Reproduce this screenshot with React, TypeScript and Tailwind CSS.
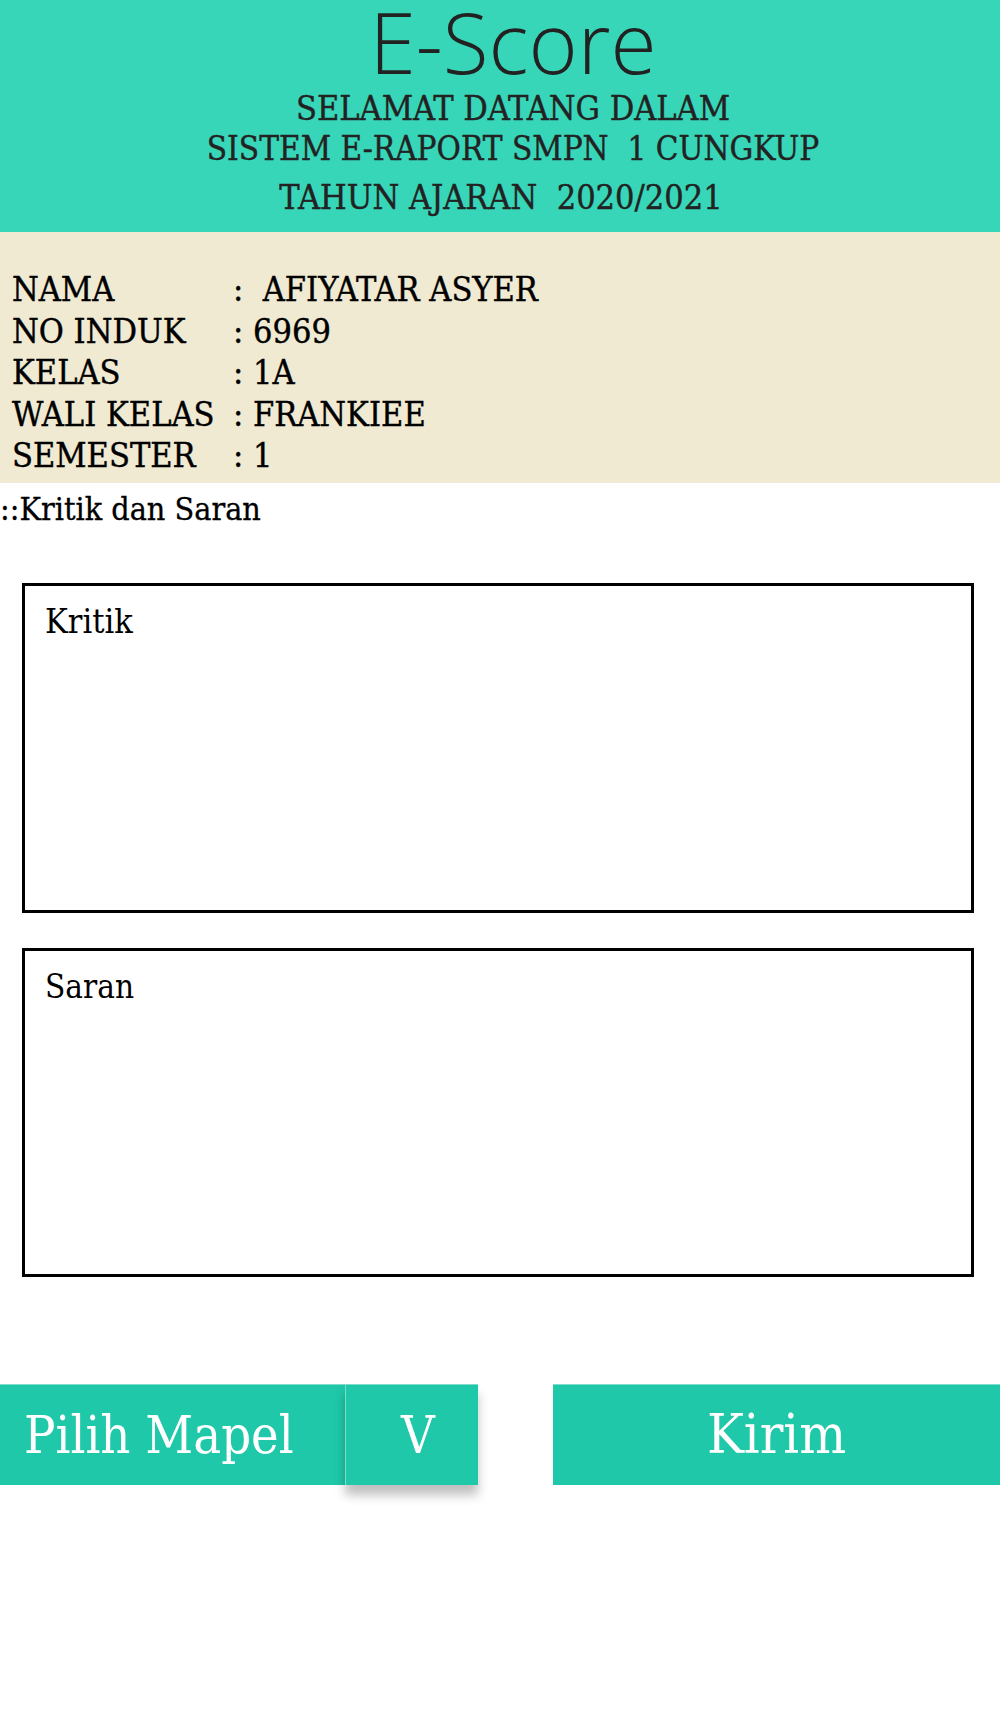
const slab = { fontFamily: '"DejaVu Serif Condensed", "DejaVu Serif", serif' }

const rows: [string, string][] = [
  ['NAMA', ':  AFIYATAR ASYER'],
  ['NO INDUK', ': 6969'],
  ['KELAS', ': 1A'],
  ['WALI KELAS', ': FRANKIEE'],
  ['SEMESTER', ': 1'],
]

export default function App() {
  return (
    <div className="w-[1000px] min-h-[1709px] bg-white text-black">
      {/* header */}
      <header className="h-[232px] bg-[#38d6b8] text-[#222222] flex flex-col items-center pl-[26px]">
        <h1
          className="text-[84px] leading-[84px] font-light"
          style={{ fontFamily: '"Open Sans", sans-serif' }}
        >
          E-Score
        </h1>
        <div style={slab} className="text-[34px] leading-[40px] mt-[4px] text-center whitespace-pre [-webkit-text-stroke-width:0.4px]">
          <p>SELAMAT DATANG DALAM</p>
          <p className="mt-[1px] text-[33px]">SISTEM E-RAPORT SMPN  1 CUNGKUP</p>
          <p className="mt-[8px] -ml-[24px]">TAHUN AJARAN  2020/2021</p>
        </div>
      </header>

      {/* data siswa */}
      <section style={slab} className="bg-[#f0ead2] pt-[37px] pb-[6px] pl-[12px] text-[34px] leading-[41.5px] [-webkit-text-stroke-width:0.4px]">
        {rows.map(([k, v]) => (
          <div key={k} className="grid grid-cols-[221px_auto]">
            <span>{k}</span>
            <span className="whitespace-pre">{v}</span>
          </div>
        ))}
      </section>

      <p style={slab} className="text-[32px] leading-[40px] mt-[6px] [-webkit-text-stroke-width:0.3px]">::Kritik dan Saran</p>

      {/* form */}
      <div className="pl-[22px] pr-[26px] mt-[54px] flex flex-col gap-[35px]">
        <div className="h-[330px] border-[3px] border-black pl-[20px] pt-[15px]">
          <p style={slab} className="text-[34px] leading-[40px]">Kritik</p>
        </div>
        <div className="h-[329px] border-[3px] border-black pl-[20px] pt-[16px]">
          <p style={slab} className="text-[33px] leading-[40px]">Saran</p>
        </div>
      </div>

      {/* tombol */}
      <div style={slab} className="mt-[107px] flex h-[101px] text-white text-[52px]">
        <div className="w-[345px] bg-[#1fc8a9] flex items-center pl-[24px] border-t border-[#7fdccb]">
          Pilih Mapel
        </div>
        <div className="w-[133px] bg-[#1fc8a9] flex items-center justify-center pl-[12px] border-l border-t border-[#7fdccb] shadow-[0_10px_10px_rgba(0,0,0,0.25)]">
          V
        </div>
        <div className="ml-[75px] flex-1 bg-[#1fc8a9] flex items-center justify-center text-[55px] border-t border-[#7fdccb]">
          Kirim
        </div>
      </div>
    </div>
  )
}
